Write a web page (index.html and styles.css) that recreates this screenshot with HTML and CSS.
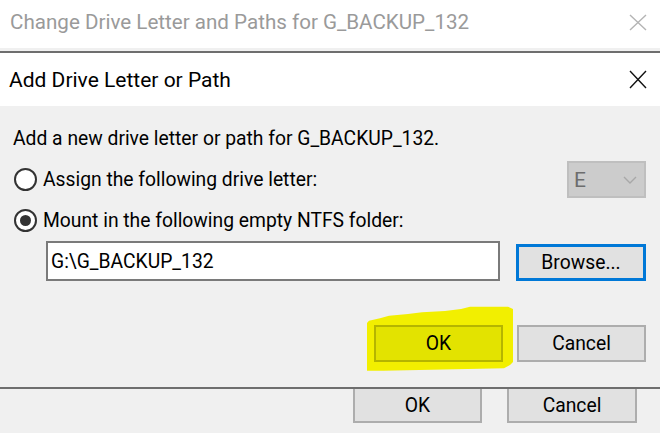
FILE: index.html
```html
<!DOCTYPE html>
<html>
<head>
<meta charset="utf-8">
<link rel="stylesheet" href="styles.css">
</head>
<body>
<div class="screen">
  <div class="back-title">
    <span class="back-title-text">Change Drive Letter and Paths for G_BACKUP_132</span>
    <svg class="close close-dim" width="18" height="17" viewBox="0 0 18 17"><path d="M1 1 L17 16 M17 1 L1 16" stroke="#b4b4b4" stroke-width="1.4" fill="none"/></svg>
  </div>
  <div class="dialog">
    <div class="dlg-title">
      <span class="dlg-title-text">Add Drive Letter or Path</span>
      <svg class="close" width="18" height="19" viewBox="0 0 18 19"><path d="M1 1 L17 18 M17 1 L1 18" stroke="#111" stroke-width="1.4" fill="none"/></svg>
    </div>
    <div class="dlg-body">
      <svg class="highlight" width="660" height="281" viewBox="0 0 660 281"><polygon fill="#f2ef00" points="367,217 369,214.7 380,212.3 389,209.7 408,208 422,206.3 445,205 461,203 470,200.7 508,200.7 513,203 513,256 510,259 504,262.3 383,264.7 367,264.7"/></svg>
      <div class="intro">Add a new drive letter or path for G_BACKUP_132.</div>
      <div class="row row-letter">
        <span class="radio"></span>
        <span class="label">Assign the following drive letter:</span>
        <div class="select">
          <span class="select-value">E</span>
          <svg class="chevron" width="14" height="8" viewBox="0 0 14 8"><path d="M1 1 L7 7 L13 1" stroke="#a8a8a8" stroke-width="1.4" fill="none"/></svg>
        </div>
      </div>
      <div class="row row-mount">
        <span class="radio checked"></span>
        <span class="label">Mount in the following empty NTFS folder:</span>
      </div>
      <div class="row row-path">
        <div class="input">G:\G_BACKUP_132</div>
        <button class="btn btn-focus">Browse...</button>
      </div>
      <div class="row row-actions">
        <button class="btn btn-hl">OK</button>
        <button class="btn">Cancel</button>
      </div>
    </div>
  </div>
  <div class="back-actions">
    <button class="btn btn-back">OK</button>
    <button class="btn btn-back">Cancel</button>
  </div>
</div>
</body>
</html>
```
FILE: styles.css
```css
* { box-sizing: border-box; }
html, body { margin: 0; padding: 0; }
body {
  width: 660px;
  height: 433px;
  overflow: hidden;
  background: #f0f0f0;
  font-family: Roboto, "Liberation Sans", sans-serif;
  color: #000;
}
.screen { width: 660px; height: 433px; display: flex; flex-direction: column; }

.back-title {
  height: 48px;
  background: #fff;
  display: flex;
  align-items: center;
  padding-left: 10px;
  padding-right: 13px;
  justify-content: space-between;
}
.back-title-text { font-size: 20.6px; color: #9a9a9a; margin-top: -5px; }
.close-dim { margin-top: -4px; }

.dialog {
  margin-top: 3px;
  border-top: 2px solid #6e6e6e;
  border-bottom: 2px solid #6e6e6e;
}
.dlg-title {
  height: 53px;
  background: #fff;
  display: flex;
  align-items: center;
  justify-content: space-between;
  padding-left: 9px;
  padding-right: 13px;
}
.dlg-title-text { font-size: 21px; margin-top: 1px; }

.dlg-body {
  position: relative;
  height: 281px;
  background: #f0f0f0;
  padding: 19px 14px 0 13px;
  display: flex;
  flex-direction: column;
  font-size: 19.3px;
}
.highlight { position: absolute; left: 0; top: 0; }
.intro { height: 28px; line-height: 28px; }
.row { display: flex; align-items: center; position: relative; }
.row-letter { margin-top: 8px; height: 37px; padding-left: 1px; }
.row-mount { margin-top: 11px; height: 22px; padding-left: 1px; }
.row-path { margin-top: 10px; height: 40px; padding-left: 33px; gap: 16px; }
.row-actions { margin-top: 44px; height: 37px; justify-content: flex-end; gap: 14px; }

.radio {
  width: 23px; height: 23px;
  border: 2px solid #333;
  border-radius: 50%;
  background: #fff;
  display: flex; align-items: center; justify-content: center;
  flex: none;
}
.radio.checked::after {
  content: "";
  width: 11px; height: 11px;
  border-radius: 50%;
  background: #333;
}
.label { margin-left: 6px; }

.select {
  margin-left: auto;
  width: 79px; height: 37px;
  background: #cccccc;
  border: 2px solid #bfbfbf;
  display: flex; align-items: center;
  padding-left: 5px; padding-right: 7px;
  justify-content: space-between;
  color: #6d6d6d;
}
.select-value { font-size: 21px; }

.input {
  width: 454px; height: 40px;
  border: 2px solid #7a7a7a;
  background: #fff;
  padding-left: 3px;
  display: flex; align-items: center;
}

.btn {
  font-family: inherit;
  font-size: 19.3px;
  color: #000;
  width: 129px; height: 37px;
  background: #e1e1e1;
  border: 2px solid #adadad;
  padding: 0;
  margin: 0;
}
.row-path .btn { width: 130px; margin-top: 2px; height: 37px; }
.btn-focus { border: 3px solid #0078d7; }
.btn-hl { background: #e3e300; border-color: #b5b500; }

.back-actions {
  display: flex;
  justify-content: flex-end;
  gap: 25px;
  padding-right: 23px;
}
.btn-back { height: 34px; border-top: none; }
.btn-back:last-child { width: 130px; }
```
